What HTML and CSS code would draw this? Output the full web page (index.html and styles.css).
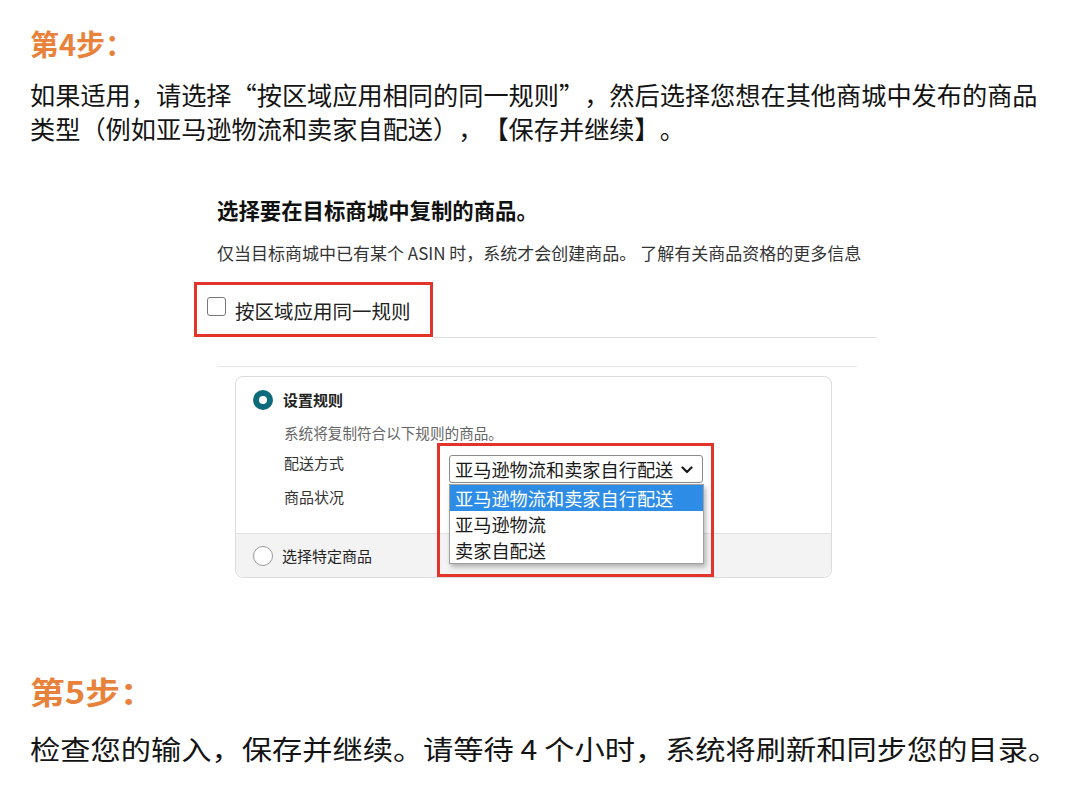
FILE: index.html
```html
<!DOCTYPE html>
<html lang="zh-CN">
<head>
<meta charset="utf-8">
<link rel="stylesheet" href="styles.css">
</head>
<body>
<main class="page">
  <h2 class="step step4">第4步：</h2>
  <p class="para">如果适用，请选择“按区域应用相同的同一规则”，然后选择您想在其他商城中发布的商品<br>类型（例如亚马逊物流和卖家自配送），【保存并继续】。</p>

  <section class="shot">
    <h3 class="shot-title">选择要在目标商城中复制的商品。</h3>
    <p class="shot-desc">仅当目标商城中已有某个 ASIN 时，系统才会创建商品。 了解有关商品资格的更多信息</p>
    <div class="check-row">
      <div class="check-box-red">
        <span class="checkbox"></span>
        <span class="check-label">按区域应用同一规则</span>
      </div>
      <div class="rule1"></div>
    </div>
    <div class="rule2"></div>

    <div class="card">
      <div class="card-top">
        <div class="radio-row">
          <span class="radio radio-on"></span>
          <span class="radio-label bold">设置规则</span>
        </div>
        <div class="card-body">
          <div class="hint">系统将复制符合以下规则的商品。</div>
          <div class="field">
            <span class="field-label">配送方式</span>
            <div class="select">
              <span>亚马逊物流和卖家自行配送</span>
              <svg class="chev" width="12" height="8" viewBox="0 0 12 8"><path d="M1.5 1.5 L6 6 L10.5 1.5" fill="none" stroke="#1a1a1a" stroke-width="2.2" stroke-linecap="round" stroke-linejoin="round"/></svg>
            </div>
          </div>
          <div class="field field2">
            <span class="field-label">商品状况</span>
          </div>
        </div>
      </div>
      <div class="card-bottom">
        <span class="radio radio-off"></span>
        <span class="radio-label">选择特定商品</span>
      </div>

      <ul class="dropdown">
        <li class="opt opt-on">亚马逊物流和卖家自行配送</li>
        <li class="opt">亚马逊物流</li>
        <li class="opt">卖家自配送</li>
      </ul>
      <div class="red-box2"></div>
    </div>
  </section>

  <h2 class="step step5">第5步：</h2>
  <p class="para5">检查您的输入，保存并继续。请等待 4 个小时，系统将刷新和同步您的目录。</p>
</main>
</body>
</html>
```

FILE: styles.css
```css
* { box-sizing: border-box; }
html, body { margin: 0; padding: 0; background: #ffffff; }
body {
  width: 1080px;
  height: 796px;
  overflow: hidden;
  font-family: "Noto Sans CJK SC", "Noto Sans", sans-serif;
  color: #111;
  text-spacing-trim: space-all;
}
.page { padding: 24px 0 0 30px; overflow: hidden; }

.step {
  margin: 0;
  color: #e8823b;
  font-weight: 700;
  font-size: 29px;
  line-height: 38px;
}
.para {
  margin: 15px 0 0 0;
  font-size: 25.2px;
  line-height: 34px;
  color: #141414;
  white-space: nowrap;
}

/* embedded screenshot */
.shot {
  margin: 51px 0 0 164px;
  width: 683px;
  position: relative;
}
.shot-title {
  margin: 0 0 0 23px;
  font-size: 21.4px;
  line-height: 28px;
  font-weight: 700;
  color: #111;
}
.shot-desc {
  margin: 17px 0 0 23px;
  font-size: 17px;
  line-height: 24px;
  color: #333;
  white-space: nowrap;
}
.check-row {
  margin-top: 17px;
  display: flex;
  align-items: flex-end;
}
.check-box-red {
  width: 239px;
  height: 55px;
  border: 3px solid #e3342b;
  display: flex;
  align-items: center;
  padding-left: 10px;
  gap: 9px;
  position: relative;
  z-index: 1;
}
.checkbox {
  width: 19px;
  height: 19px;
  border: 1.6px solid #777;
  border-radius: 3px;
  background: #fff;
  margin-top: -6px;
}
.check-label {
  font-size: 19.5px;
  color: #222;
  line-height: 24px;
  margin-top: 2px;
}
.rule1 {
  flex: 1;
  height: 1px;
  background: #e2e2e2;
  margin-bottom: -1px;
}
.rule2 {
  margin: 29px 20px 0 23px;
  height: 1px;
  background: #e6e6e6;
}

.card {
  margin: 9px 45px 0 41px;
  border: 1px solid #dcdcdc;
  border-radius: 8px;
  height: 202px;
  position: relative;
  overflow: visible;
}
.card-top {
  height: 157px;
  padding: 13px 0 0 17px;
  border-bottom: 1px solid #e2e2e2;
}
.radio-row {
  display: flex;
  align-items: center;
  gap: 10px;
}
.radio {
  width: 20px;
  height: 20px;
  border-radius: 50%;
  flex: none;
  background: #fff;
}
.radio-on { border: 6px solid #0d6b7b; }
.radio-off { border: 1.5px solid #9a9a9a; }
.radio-label {
  font-size: 15px;
  line-height: 20px;
  color: #222;
}
.bold { font-weight: 700; }
.card-body { padding-left: 31px; }
.hint {
  margin-top: 13px;
  font-size: 14.6px;
  line-height: 20px;
  color: #666;
}
.field {
  display: flex;
  align-items: flex-start;
  margin-top: 10px;
  height: 28px;
}
.field-label {
  font-size: 15px;
  line-height: 20px;
  color: #333;
  width: 165px;
  flex: none;
}
.field2 { margin-top: 6px; }
.select {
  margin-top: 2px;
  width: 254px;
  height: 28px;
  border: 1px solid #8a8a8a;
  border-radius: 3px;
  background: #fff;
  display: flex;
  align-items: center;
  padding: 0 9px 0 5px;
  justify-content: space-between;
  font-size: 18.2px;
  color: #1a1a1a;
  line-height: 26px;
}
.chev { margin-top: 1px; }

.card-bottom {
  height: 43px;
  background: #f3f3f3;
  border-radius: 0 0 8px 8px;
  display: flex;
  align-items: center;
  gap: 9px;
  padding-left: 17px;
}

.dropdown {
  position: absolute;
  left: 213px;
  top: 107px;
  width: 255px;
  margin: 0;
  padding: 0;
  list-style: none;
  background: #fff;
  border: 1px solid #a0a0a0;
  box-shadow: 2px 3px 5px rgba(0,0,0,0.28);
  z-index: 2;
}
.opt {
  height: 26px;
  line-height: 26px;
  font-size: 18.2px;
  padding-left: 5px;
  color: #1a1a1a;
  white-space: nowrap;
}
.opt-on {
  background: #2d8ce6;
  color: #fff;
}
.red-box2 {
  position: absolute;
  left: 201px;
  top: 66px;
  width: 277px;
  height: 134px;
  border: 3px solid #e3342b;
  z-index: 3;
}

.step5 {
  margin-top: 93px;
  font-size: 31px;
  line-height: 40px;
  transform: scaleX(1.12);
  transform-origin: left center;
}
.para5 {
  margin: 20px 0 0 0;
  font-size: 27px;
  line-height: 36px;
  color: #141414;
  white-space: nowrap;
  transform: scaleX(1.12);
  transform-origin: left center;
}
```
